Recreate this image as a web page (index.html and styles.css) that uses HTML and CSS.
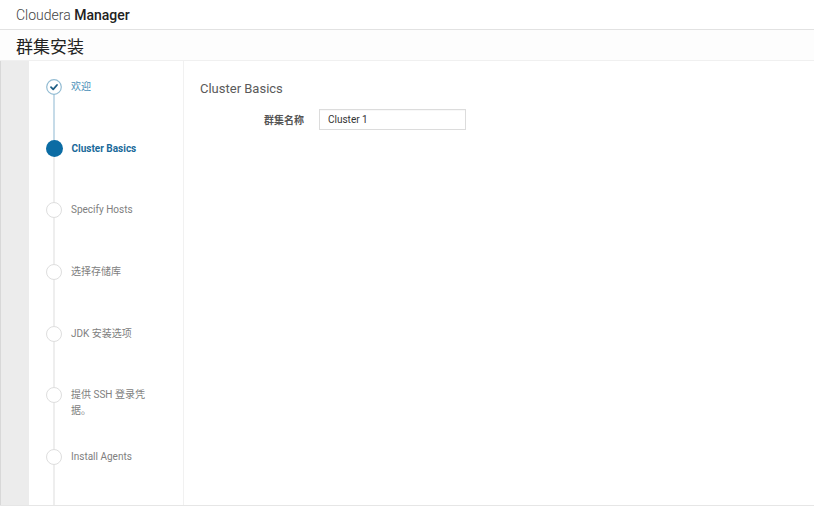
FILE: index.html
```html
<!DOCTYPE html>
<html lang="zh">
<head>
<meta charset="utf-8">
<title>Cloudera Manager</title>
<link rel="stylesheet" href="styles.css">
</head>
<body>
<header class="topbar"><span class="brand-light">Cloudera</span>&nbsp;<span class="brand-bold">Manager</span></header>
<div class="titlebar">群集安装</div>
<div class="main">
  <div class="gutter"></div>
  <nav class="sidebar">
    <div class="step done">
      <span class="dot"><svg viewBox="0 0 16 16" width="16" height="16"><circle cx="8" cy="8" r="7.3" fill="#fff" stroke="#93bcd3" stroke-width="1.2"/><path d="M5 8.2 L7.2 10.3 L11 6" fill="none" stroke="#1d5d84" stroke-width="1.8" stroke-linecap="round" stroke-linejoin="round"/></svg></span>
      <span class="label">欢迎</span>
    </div>
    <div class="step active">
      <span class="dot"></span>
      <span class="label">Cluster Basics</span>
    </div>
    <div class="step"><span class="dot"></span><span class="label">Specify Hosts</span></div>
    <div class="step"><span class="dot"></span><span class="label">选择存储库</span></div>
    <div class="step"><span class="dot"></span><span class="label">JDK 安装选项</span></div>
    <div class="step"><span class="dot"></span><span class="label">提供 SSH 登录凭据。</span></div>
    <div class="step"><span class="dot"></span><span class="label">Install Agents</span></div>
    <div class="step"><span class="dot"></span><span class="label"></span></div>
  </nav>
  <section class="content">
    <h2 class="heading">Cluster Basics</h2>
    <div class="form-row">
      <label class="form-label" for="cname">群集名称</label>
      <input class="form-input" id="cname" type="text" value="Cluster 1">
    </div>
  </section>
</div>
</body>
</html>
```
FILE: styles.css
```css
html, body {
  margin: 0;
  padding: 0;
  background: #fff;
  font-family: Roboto, "Noto Sans CJK SC", sans-serif;
  color: #333;
  overflow: hidden;
}
.topbar {
  height: 29px;
  border-bottom: 1px solid #e2e2e2;
  padding-left: 16px;
  display: flex;
  align-items: center;
  font-size: 14px;
  color: #333;
}
.brand-light { font-weight: 300; color: #444; }
.brand-bold { font-weight: 500; color: #222; }
.titlebar {
  height: 30px;
  border-bottom: 1px solid #f0f0f0;
  padding-left: 16px;
  display: flex;
  align-items: center;
  font-size: 17px;
  color: #222;
  background: #fdfdfd;
}
.main {
  display: flex;
  height: 444px;
  border-bottom: 1px solid #e6e6e6;
}
.gutter {
  width: 28px;
  background: #ececec;
  border-left: 1px solid #d8d8d8;
  flex: none;
}
.sidebar {
  width: 155px;
  flex: none;
  border-right: 1px solid #f1f1f1;
  padding-top: 18px;
  box-sizing: border-box;
  overflow: hidden;
}
.step {
  position: relative;
  height: 61.67px;
  display: flex;
  align-items: flex-start;
  padding-left: 17px;
}
.step::before {
  content: "";
  position: absolute;
  left: 24px;
  top: 8px;
  width: 2px;
  height: 61.67px;
  background: #eeeeee;
}
.step.done::before { background: #c6dbe8; }
.dot {
  position: relative;
  width: 16px;
  height: 16px;
  border-radius: 50%;
  border: 1.5px solid #dedede;
  background: #fff;
  box-sizing: border-box;
  flex: none;
  display: block;
}
.done .dot { border: none; background: transparent; }
.done .dot svg { display: block; }
.active .dot {
  width: 17px;
  height: 17px;
  margin-left: -0.5px;
  margin-top: -0.5px;
  border: none;
  background: #0b6ca4;
}
.label {
  margin-left: 9px;
  font-size: 10px;
  line-height: 16px;
  color: #808080;
  max-width: 80px;
}
.done .label { color: #4a90b8; }
.active .label { color: #1a6a9a; font-weight: 700; }
.content {
  flex: 1;
  padding: 20px 0 0 16px;
}
.heading {
  margin: 0;
  font-size: 13px;
  line-height: 16px;
  font-weight: 400;
  color: #5a5a5a;
}
.form-row {
  display: flex;
  align-items: center;
  margin-top: 12px;
  gap: 15px;
}
.form-label {
  width: 104px;
  text-align: right;
  font-size: 10px;
  font-weight: 700;
  color: #555;
}
.form-input {
  width: 147px;
  height: 21px;
  box-sizing: border-box;
  border: 1px solid #dcdcdc;
  padding: 0 8px;
  font-family: Roboto, "Noto Sans CJK SC", sans-serif;
  font-size: 10px;
  color: #333;
  outline: none;
  margin: 0;
  box-shadow: inset 0 1px 1px rgba(0,0,0,0.03);
}
```
